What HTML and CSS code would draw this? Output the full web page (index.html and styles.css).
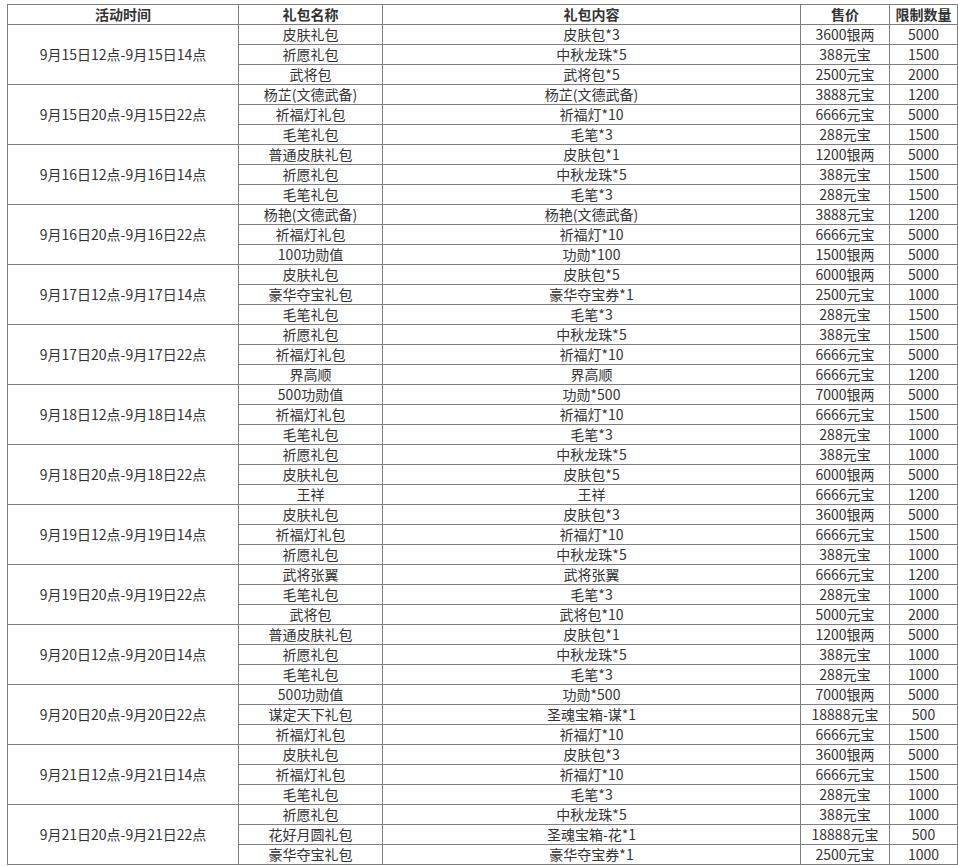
FILE: index.html
```html
<!DOCTYPE html>
<html lang="zh-CN">
<head>
<meta charset="utf-8">
<title>礼包活动</title>
<link rel="stylesheet" href="styles.css">
</head>
<body>
<div class="wrap">
<table class="gifts">
<colgroup><col class="c1"><col class="c2"><col class="c3"><col class="c4"><col class="c5"></colgroup>
<thead>
<tr><th>活动时间</th><th>礼包名称</th><th>礼包内容</th><th>售价</th><th>限制数量</th></tr>
</thead>
<tbody>
<tr><td rowspan="3">9月15日12点-9月15日14点</td><td>皮肤礼包</td><td>皮肤包*3</td><td>3600银两</td><td>5000</td></tr>
<tr><td>祈愿礼包</td><td>中秋龙珠*5</td><td>388元宝</td><td>1500</td></tr>
<tr><td>武将包</td><td>武将包*5</td><td>2500元宝</td><td>2000</td></tr>
<tr><td rowspan="3">9月15日20点-9月15日22点</td><td>杨芷(文德武备)</td><td>杨芷(文德武备)</td><td>3888元宝</td><td>1200</td></tr>
<tr><td>祈福灯礼包</td><td>祈福灯*10</td><td>6666元宝</td><td>5000</td></tr>
<tr><td>毛笔礼包</td><td>毛笔*3</td><td>288元宝</td><td>1500</td></tr>
<tr><td rowspan="3">9月16日12点-9月16日14点</td><td>普通皮肤礼包</td><td>皮肤包*1</td><td>1200银两</td><td>5000</td></tr>
<tr><td>祈愿礼包</td><td>中秋龙珠*5</td><td>388元宝</td><td>1500</td></tr>
<tr><td>毛笔礼包</td><td>毛笔*3</td><td>288元宝</td><td>1500</td></tr>
<tr><td rowspan="3">9月16日20点-9月16日22点</td><td>杨艳(文德武备)</td><td>杨艳(文德武备)</td><td>3888元宝</td><td>1200</td></tr>
<tr><td>祈福灯礼包</td><td>祈福灯*10</td><td>6666元宝</td><td>5000</td></tr>
<tr><td>100功勋值</td><td>功勋*100</td><td>1500银两</td><td>5000</td></tr>
<tr><td rowspan="3">9月17日12点-9月17日14点</td><td>皮肤礼包</td><td>皮肤包*5</td><td>6000银两</td><td>5000</td></tr>
<tr><td>豪华夺宝礼包</td><td>豪华夺宝券*1</td><td>2500元宝</td><td>1000</td></tr>
<tr><td>毛笔礼包</td><td>毛笔*3</td><td>288元宝</td><td>1500</td></tr>
<tr><td rowspan="3">9月17日20点-9月17日22点</td><td>祈愿礼包</td><td>中秋龙珠*5</td><td>388元宝</td><td>1500</td></tr>
<tr><td>祈福灯礼包</td><td>祈福灯*10</td><td>6666元宝</td><td>5000</td></tr>
<tr><td>界高顺</td><td>界高顺</td><td>6666元宝</td><td>1200</td></tr>
<tr><td rowspan="3">9月18日12点-9月18日14点</td><td>500功勋值</td><td>功勋*500</td><td>7000银两</td><td>5000</td></tr>
<tr><td>祈福灯礼包</td><td>祈福灯*10</td><td>6666元宝</td><td>1500</td></tr>
<tr><td>毛笔礼包</td><td>毛笔*3</td><td>288元宝</td><td>1000</td></tr>
<tr><td rowspan="3">9月18日20点-9月18日22点</td><td>祈愿礼包</td><td>中秋龙珠*5</td><td>388元宝</td><td>1000</td></tr>
<tr><td>皮肤礼包</td><td>皮肤包*5</td><td>6000银两</td><td>5000</td></tr>
<tr><td>王祥</td><td>王祥</td><td>6666元宝</td><td>1200</td></tr>
<tr><td rowspan="3">9月19日12点-9月19日14点</td><td>皮肤礼包</td><td>皮肤包*3</td><td>3600银两</td><td>5000</td></tr>
<tr><td>祈福灯礼包</td><td>祈福灯*10</td><td>6666元宝</td><td>1500</td></tr>
<tr><td>祈愿礼包</td><td>中秋龙珠*5</td><td>388元宝</td><td>1000</td></tr>
<tr><td rowspan="3">9月19日20点-9月19日22点</td><td>武将张翼</td><td>武将张翼</td><td>6666元宝</td><td>1200</td></tr>
<tr><td>毛笔礼包</td><td>毛笔*3</td><td>288元宝</td><td>1000</td></tr>
<tr><td>武将包</td><td>武将包*10</td><td>5000元宝</td><td>2000</td></tr>
<tr><td rowspan="3">9月20日12点-9月20日14点</td><td>普通皮肤礼包</td><td>皮肤包*1</td><td>1200银两</td><td>5000</td></tr>
<tr><td>祈愿礼包</td><td>中秋龙珠*5</td><td>388元宝</td><td>1000</td></tr>
<tr><td>毛笔礼包</td><td>毛笔*3</td><td>288元宝</td><td>1000</td></tr>
<tr><td rowspan="3">9月20日20点-9月20日22点</td><td>500功勋值</td><td>功勋*500</td><td>7000银两</td><td>5000</td></tr>
<tr><td>谋定天下礼包</td><td>圣魂宝箱-谋*1</td><td>18888元宝</td><td>500</td></tr>
<tr><td>祈福灯礼包</td><td>祈福灯*10</td><td>6666元宝</td><td>1500</td></tr>
<tr><td rowspan="3">9月21日12点-9月21日14点</td><td>皮肤礼包</td><td>皮肤包*3</td><td>3600银两</td><td>5000</td></tr>
<tr><td>祈福灯礼包</td><td>祈福灯*10</td><td>6666元宝</td><td>1500</td></tr>
<tr><td>毛笔礼包</td><td>毛笔*3</td><td>288元宝</td><td>1000</td></tr>
<tr><td rowspan="3">9月21日20点-9月21日22点</td><td>祈愿礼包</td><td>中秋龙珠*5</td><td>388元宝</td><td>1000</td></tr>
<tr><td>花好月圆礼包</td><td>圣魂宝箱-花*1</td><td>18888元宝</td><td>500</td></tr>
<tr><td>豪华夺宝礼包</td><td>豪华夺宝券*1</td><td>2500元宝</td><td>1000</td></tr>
</tbody>
</table>
</div>
</body>
</html>
```
FILE: styles.css
```css
html, body {
  margin: 0;
  padding: 0;
  background: #fff;
}
.wrap {
  padding: 4px 0 0 7px;
}
.gifts {
  border-collapse: collapse;
  table-layout: fixed;
  width: 950px;
  font-family: "Noto Sans CJK SC", "Noto Sans", sans-serif;
  font-size: 14px;
  color: #333;
}
.c1 { width: 231px; }
.c2 { width: 144px; }
.c3 { width: 418px; }
.c4 { width: 89px; }
.c5 { width: 68px; }
.gifts th,
.gifts td {
  border: 1px solid #7f7f7f;
  padding: 0;
  height: 19px;
  line-height: 19px;
  text-align: center;
  vertical-align: middle;
  white-space: nowrap;
  overflow: hidden;
}
.gifts th {
  font-weight: bold;
}
```
